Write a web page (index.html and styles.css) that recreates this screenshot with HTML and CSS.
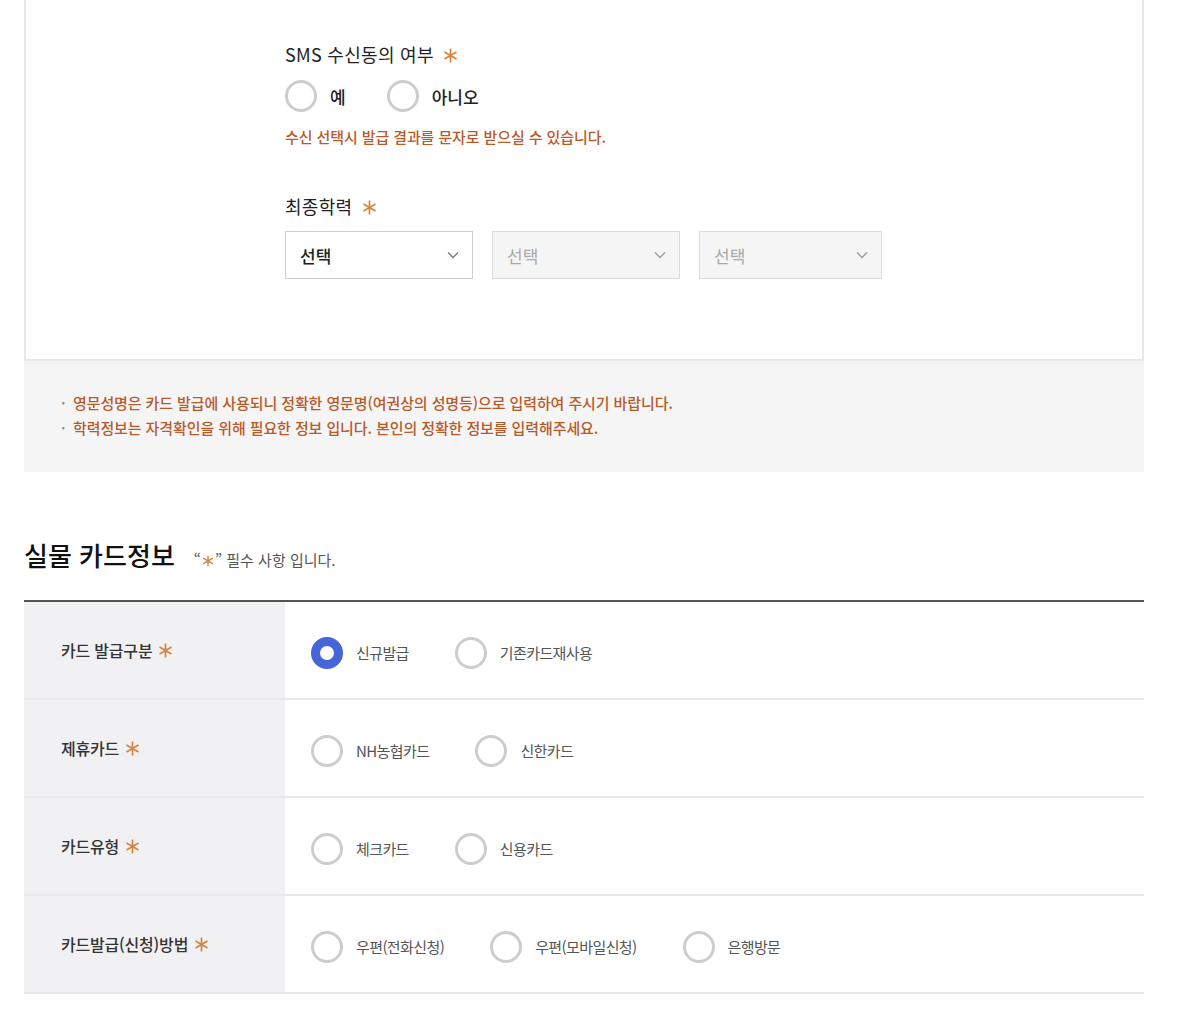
FILE: index.html
```html
<!DOCTYPE html>
<html lang="ko">
<head>
    <meta charset="UTF-8">
    <meta name="viewport" content="width=device-width, initial-scale=1.0">
    <title>실물 카드정보</title>
    <link rel="stylesheet" href="styles.css">
</head>
<body>
<div class="wrap">

    <div class="form-box">
        <div class="field">
            <div class="field-label">SMS 수신동의 여부 <svg class="req" viewBox="0 0 14 14"><path d="M7 0.5V13.5M1.4 3.75L12.6 10.25M12.6 3.75L1.4 10.25"/></svg></div>
            <div class="radio-row">
                <label class="radio"><input type="radio" name="sms"><span>예</span></label>
                <label class="radio"><input type="radio" name="sms"><span>아니오</span></label>
            </div>
            <p class="help">수신 선택시 발급 결과를 문자로 받으실 수 있습니다.</p>
        </div>

        <div class="field field-edu">
            <div class="field-label">최종학력 <svg class="req" viewBox="0 0 14 14"><path d="M7 0.5V13.5M1.4 3.75L12.6 10.25M12.6 3.75L1.4 10.25"/></svg></div>
            <div class="select-row">
                <div class="select">선택<svg class="arrow" viewBox="0 0 12 8"><path d="M1 1.5L6 6.5L11 1.5"/></svg></div>
                <div class="select disabled">선택<svg class="arrow" viewBox="0 0 12 8"><path d="M1 1.5L6 6.5L11 1.5"/></svg></div>
                <div class="select disabled narrow">선택<svg class="arrow" viewBox="0 0 12 8"><path d="M1 1.5L6 6.5L11 1.5"/></svg></div>
            </div>
        </div>
    </div>

    <ul class="notice">
        <li>영문성명은 카드 발급에 사용되니 정확한 영문명(여권상의 성명등)으로 입력하여 주시기 바랍니다.</li>
        <li>학력정보는 자격확인을 위해 필요한 정보 입니다. 본인의 정확한 정보를 입력해주세요.</li>
    </ul>

    <div class="section-title">
        <h2>실물 카드정보</h2>
        <span class="req-note">“<svg class="req small" viewBox="0 0 14 14"><path d="M7 0.5V13.5M1.4 3.75L12.6 10.25M12.6 3.75L1.4 10.25"/></svg>” 필수 사항 입니다.</span>
    </div>

    <div class="info-table">
        <div class="row">
            <div class="th">카드 발급구분 <svg class="req" viewBox="0 0 14 14"><path d="M7 0.5V13.5M1.4 3.75L12.6 10.25M12.6 3.75L1.4 10.25"/></svg></div>
            <div class="td">
                <label class="radio"><input type="radio" name="issue" checked><span>신규발급</span></label>
                <label class="radio"><input type="radio" name="issue"><span>기존카드재사용</span></label>
            </div>
        </div>
        <div class="row">
            <div class="th">제휴카드 <svg class="req" viewBox="0 0 14 14"><path d="M7 0.5V13.5M1.4 3.75L12.6 10.25M12.6 3.75L1.4 10.25"/></svg></div>
            <div class="td">
                <label class="radio"><input type="radio" name="partner"><span>NH농협카드</span></label>
                <label class="radio"><input type="radio" name="partner"><span>신한카드</span></label>
            </div>
        </div>
        <div class="row">
            <div class="th">카드유형 <svg class="req" viewBox="0 0 14 14"><path d="M7 0.5V13.5M1.4 3.75L12.6 10.25M12.6 3.75L1.4 10.25"/></svg></div>
            <div class="td">
                <label class="radio"><input type="radio" name="type"><span>체크카드</span></label>
                <label class="radio"><input type="radio" name="type"><span>신용카드</span></label>
            </div>
        </div>
        <div class="row">
            <div class="th">카드발급(신청)방법 <svg class="req" viewBox="0 0 14 14"><path d="M7 0.5V13.5M1.4 3.75L12.6 10.25M12.6 3.75L1.4 10.25"/></svg></div>
            <div class="td">
                <label class="radio"><input type="radio" name="method"><span>우편(전화신청)</span></label>
                <label class="radio"><input type="radio" name="method"><span>우편(모바일신청)</span></label>
                <label class="radio"><input type="radio" name="method"><span>은행방문</span></label>
            </div>
        </div>
    </div>

</div>
</body>
</html>
```

FILE: styles.css
```css
body {
    margin: 0;
    font-family: "Noto Sans CJK KR", "Noto Sans", sans-serif;
    color: #222;
    background: #fff;
}
.wrap {
    width: 1120px;
    padding-left: 24px;
}

/* asterisk mark */
.req {
    width: 15px;
    height: 15px;
    margin-left: 4px;
    vertical-align: -1px;
}
.req path {
    stroke: #d6843f;
    stroke-width: 1.6;
    fill: none;
}
.req.small {
    width: 12px;
    height: 12px;
    margin: 0 1px;
}

/* top form box */
.form-box {
    border: 2px solid #e8e8e8;
    border-top: none;
    padding: 40px 0 80px 259px;
}
.field-label {
    font-size: 18px;
    line-height: 28px;
    letter-spacing: 0.3px;
}
.radio-row {
    display: flex;
    margin-top: 12px;
}
.radio {
    display: inline-flex;
    align-items: center;
    margin-right: 41px;
}
.radio input {
    appearance: none;
    -webkit-appearance: none;
    width: 32px;
    height: 32px;
    margin: 0 13px 0 0;
    border: 3px solid #cdcdcd;
    border-radius: 50%;
    box-sizing: border-box;
    background: #fff;
}
.radio input:checked {
    border: 9px solid #4565d8;
}
.radio-row .radio span {
    font-size: 17px;
    font-weight: 500;
    color: #222;
}
.help {
    margin: 14px 0 0;
    font-size: 15px;
    line-height: 22px;
    font-weight: 500;
    color: #b85a2a;
    letter-spacing: -0.1px;
}
.field-edu {
    margin-top: 44px;
}
.select-row {
    display: flex;
    gap: 19px;
    margin-top: 11px;
}
.select {
    width: 188px;
    height: 48px;
    box-sizing: border-box;
    border: 1px solid #cfcfcf;
    padding: 0 13px 0 14px;
    display: flex;
    align-items: center;
    justify-content: space-between;
    font-size: 17px;
    font-weight: 500;
    color: #222;
    background: #fff;
}
.select.disabled {
    background: #f5f5f5;
    border-color: #dcdcdc;
    color: #a9a9a9;
    font-weight: 400;
}
.select.narrow {
    width: 183px;
}
.arrow {
    width: 12px;
    height: 8px;
}
.arrow path {
    stroke: #777;
    stroke-width: 1.3;
    fill: none;
}
.select.disabled .arrow path {
    stroke: #999;
}

/* notice box */
.notice {
    margin: 0;
    padding: 29px 0 32px 37px;
    list-style: none;
    background: #f5f5f5;
}
.notice li {
    position: relative;
    padding-left: 12px;
    font-size: 15px;
    line-height: 25px;
    font-weight: 500;
    color: #b85a2a;
    letter-spacing: -0.1px;
}
.notice li::before {
    content: "·";
    position: absolute;
    left: 0;
    color: #888;
}

/* section title */
.section-title {
    display: flex;
    align-items: baseline;
    margin-top: 65px;
}
.section-title h2 {
    margin: 0;
    font-size: 26px;
    line-height: 36px;
    font-weight: 500;
    letter-spacing: 0;
    color: #111;
}
.req-note {
    margin-left: 19px;
    font-size: 15px;
    color: #555;
    letter-spacing: 0;
}

/* table */
.info-table {
    margin-top: 27px;
    border-top: 2px solid #555;
}
.row {
    display: flex;
    height: 98px;
    border-bottom: 2px solid #e8e8e8;
    box-sizing: border-box;
}
.th {
    width: 261px;
    flex-shrink: 0;
    background: #f1f1f3;
    padding-left: 37px;
    box-sizing: border-box;
    display: flex;
    align-items: center;
    font-size: 16px;
    font-weight: 500;
    color: #333;
    letter-spacing: -0.2px;
}
.th .req {
    margin-left: 6px;
}
.td {
    display: flex;
    align-items: center;
    padding-left: 26px;
    padding-top: 5px;
}
.td .radio {
    margin-right: 46px;
}
.td .radio span {
    font-size: 15px;
    color: #555;
    letter-spacing: -0.6px;
}
```
